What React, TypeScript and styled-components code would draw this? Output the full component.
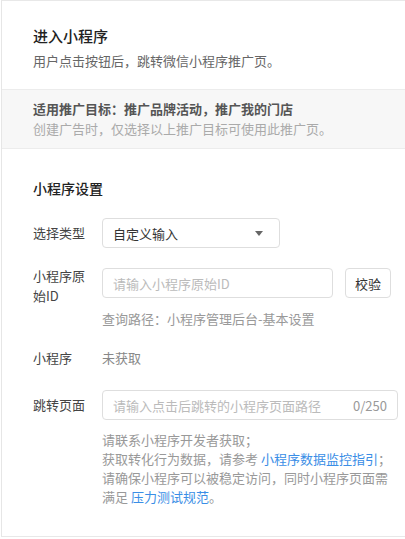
import {FC} from 'react';
import styled, {createGlobalStyle} from 'styled-components';

const GlobalStyle = createGlobalStyle`
  html,
  body {
    margin: 0;
    padding: 0;
    background: #fff;
  }

  body {
    font-family: 'Noto Sans CJK SC', 'Noto Sans', sans-serif;
    color: #333;
  }

  * {
    box-sizing: border-box;
  }
`;

const Panel = styled.div`
  margin-left: 1px;
  width: 404px;
  height: 537px;
  border-top: 1px solid #e8e8e8;
  border-left: 1px solid #e6e6e6;
  border-bottom: 1px solid #e8e8e8;
  overflow: hidden;
`;

const Header = styled.div`
  padding: 24px 8px 18px 31px;
`;

const Title = styled.h2`
  margin: 0;

  font-size: 15px;
  font-weight: 500;
  line-height: 22px;

  color: #222;
`;

const Desc = styled.p`
  margin: 4px 0 0;

  font-size: 13px;
  line-height: 20px;

  color: #666;
`;

const Notice = styled.div`
  padding: 9px 8px 9px 31px;

  background: #f7f7f7;
  border-top: 1px solid #ececec;
  border-bottom: 1px solid #ececec;
`;

const NoticeHead = styled.p`
  margin: 0;

  font-size: 13px;
  font-weight: 700;
  line-height: 20px;

  color: #555;
`;

const NoticeSub = styled.p`
  margin: 0;

  font-size: 13px;
  line-height: 20px;

  color: #aaa;
`;

const Settings = styled.div`
  padding: 28px 8px 0 31px;
`;

const SectionTitle = styled.h3`
  margin: 0;

  font-size: 14px;
  font-weight: 500;
  line-height: 22px;

  color: #222;
`;

const Row = styled.div<{$gap: number}>`
  display: flex;
  align-items: flex-start;
  margin-top: ${p => p.$gap}px;
`;

const Label = styled.div<{$wrap?: boolean}>`
  flex: 0 0 60px;
  width: 60px;
  margin-right: 9px;
  padding-top: ${p => (p.$wrap ? '0' : '5px')};
  margin-top: ${p => (p.$wrap ? '-2px' : '0')};

  font-size: 13px;
  line-height: 20px;

  color: #444;
`;

const Field = styled.div`
  display: flex;
  flex-direction: column;
  min-width: 0;
`;

const Line = styled.div`
  display: flex;
  align-items: center;
  gap: 12px;
`;

const Box = styled.div<{$width: number}>`
  display: flex;
  align-items: center;
  justify-content: space-between;

  width: ${p => p.$width}px;
  height: 30px;
  padding: 0 10px;

  background: #fff;
  border: 1px solid #dedede;
  border-radius: 4px;

  font-size: 13px;
  color: #333;
`;

const Placeholder = styled.span`
  color: #bbb;
`;

const Counter = styled.span`
  font-size: 13px;
  color: #999;
`;

const Caret = styled.span`
  width: 0;
  height: 0;
  margin-right: 6px;

  border-left: 4px solid transparent;
  border-right: 4px solid transparent;
  border-top: 5px solid #666;
`;

const Button = styled.button`
  width: 46px;
  height: 30px;
  padding: 0;

  background: #fff;
  border: 1px solid #dedede;
  border-radius: 4px;

  font-family: inherit;
  font-size: 13px;
  color: #333;
`;

const Value = styled.div`
  padding-top: 5px;

  font-size: 13px;
  line-height: 20px;

  color: #888;
`;

const Help = styled.p<{$top: number; $lh: number}>`
  margin: ${p => p.$top}px 0 0;

  font-size: 13px;
  line-height: ${p => p.$lh}px;

  color: #999;

  a {
    color: #3a8ee6;
    text-decoration: none;
  }
`;

const App: FC = () => (
  <>
    <GlobalStyle />
    <Panel>
      <Header>
        <Title>进入小程序</Title>
        <Desc>用户点击按钮后，跳转微信小程序推广页。</Desc>
      </Header>
      <Notice>
        <NoticeHead>适用推广目标：推广品牌活动，推广我的门店</NoticeHead>
        <NoticeSub>创建广告时，仅选择以上推广目标可使用此推广页。</NoticeSub>
      </Notice>
      <Settings>
        <SectionTitle>小程序设置</SectionTitle>

        <Row $gap={19}>
          <Label>选择类型</Label>
          <Field>
            <Box $width={178}>
              <span>自定义输入</span>
              <Caret />
            </Box>
          </Field>
        </Row>

        <Row $gap={20}>
          <Label $wrap>小程序原始ID</Label>
          <Field>
            <Line>
              <Box $width={231}>
                <Placeholder>请输入小程序原始ID</Placeholder>
              </Box>
              <Button>校验</Button>
            </Line>
            <Help $top={11} $lh={20}>
              查询路径：小程序管理后台-基本设置
            </Help>
          </Field>
        </Row>

        <Row $gap={14}>
          <Label>小程序</Label>
          <Value>未获取</Value>
        </Row>

        <Row $gap={22}>
          <Label>跳转页面</Label>
          <Field>
            <Box $width={296}>
              <Placeholder>请输入点击后跳转的小程序页面路径</Placeholder>
              <Counter>0/250</Counter>
            </Box>
            <Help $top={10} $lh={19}>
              请联系小程序开发者获取；
              <br />
              获取转化行为数据，请参考 <a href="#">小程序数据监控指引</a>；
              <br />
              请确保小程序可以被稳定访问，同时小程序页面需
              <br />
              满足 <a href="#">压力测试规范</a>。
            </Help>
          </Field>
        </Row>
      </Settings>
    </Panel>
  </>
);

export default App;
